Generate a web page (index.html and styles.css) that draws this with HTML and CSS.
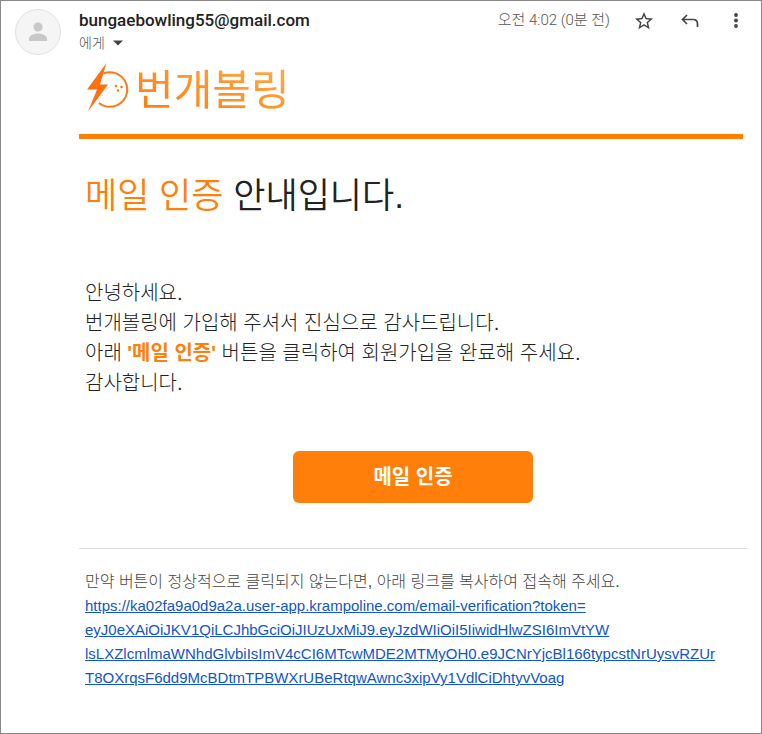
FILE: index.html
```html
<!DOCTYPE html>
<html lang="ko">
<head>
<meta charset="UTF-8">
<meta name="viewport" content="width=device-width, initial-scale=1.0">
<title>번개볼링 메일 인증</title>
<link rel="stylesheet" href="styles.css">
</head>
<body>

<div class="message">
    <div class="avatar">
        <svg width="24" height="24" viewBox="0 0 24 24" aria-hidden="true">
            <circle cx="12" cy="7" r="4.6" fill="#c8c8c8"/>
            <path d="M3 21v-2.500c0-3.500 5.500-5 9-5s9 1.500 9 5V21z" fill="#c8c8c8"/>
        </svg>
    </div>

    <div class="content">
        <header class="mail-header">
            <div class="sender">
                <div class="address">bungaebowling55@gmail.com</div>
                <button type="button" class="recipient">에게
                    <svg width="10" height="6" viewBox="0 0 10 6" aria-hidden="true"><path d="M0 0.500h10L5 5.500z" fill="#444"/></svg>
                </button>
            </div>
            <div class="time">오전 4:02 (0분 전)</div>
            <div class="actions">
                <button type="button" aria-label="별표">
                    <svg width="20" height="20" viewBox="1 1 22 22"><path d="M22 9.240l-7.190-.62L12 2 9.190 8.630 2 9.240l5.460 4.730L5.820 21 12 17.270 18.180 21l-1.630-7.030L22 9.240zM12 15.400l-3.760 2.270 1-4.280-3.320-2.880 4.380-.38L12 6.100l1.710 4.040 4.380.38-3.320 2.880 1 4.280L12 15.400z" fill="#444"/></svg>
                </button>
                <button type="button" aria-label="답장">
                    <svg width="20" height="20" viewBox="0 0 20 20" fill="none" stroke="#444" stroke-width="1.700"><path d="M7 4L2.500 8.500 7 13M2.500 8.500H13c3 0 4.500 2 4.500 4.500v3"/></svg>
                </button>
                <button type="button" aria-label="더보기">
                    <svg width="20" height="20" viewBox="0 0 20 20" fill="#444"><circle cx="10" cy="4" r="1.900"/><circle cx="10" cy="9.500" r="1.900"/><circle cx="10" cy="15" r="1.900"/></svg>
                </button>
            </div>
        </header>

        <div class="brand">
            <svg width="44" height="50" viewBox="0 0 44 50" aria-hidden="true">
                <path d="M18.500 11.500A17.300 17.300 0 1 1 14 41" fill="none" stroke="#ff7a14" stroke-width="2"/>
                <path d="M21.500 1L2 27.500h10L3 49.500 23 22.500h-8z" fill="#ff7010"/>
                <circle cx="31" cy="24" r="1.300" fill="#ff7a14"/>
                <circle cx="36.500" cy="25" r="1.300" fill="#ff7a14"/>
                <circle cx="33" cy="28.500" r="1.300" fill="#ff7a14"/>
            </svg>
            <span class="brand-name">번개볼링</span>
        </div>

        <h1><span class="accent">메일 인증</span> 안내입니다.</h1>

        <p class="text">
            안녕하세요.<br>
            번개볼링에 가입해 주셔서 진심으로 감사드립니다.<br>
            아래 <b class="accent">'메일 인증'</b> 버튼을 클릭하여 회원가입을 완료해 주세요.<br>
            감사합니다.
        </p>

        <button type="button" class="verify">메일 인증</button>

        <footer class="fallback">
            <p>만약 버튼이 정상적으로 클릭되지 않는다면, 아래 링크를 복사하여 접속해 주세요.</p>
            <a href="#">https://ka02fa9a0d9a2a.user-app.krampoline.com/email-verification?token=<br>eyJ0eXAiOiJKV1QiLCJhbGciOiJIUzUxMiJ9.eyJzdWIiOiI5IiwidHlwZSI6ImVtYW<br>lsLXZlcmlmaWNhdGlvbiIsImV4cCI6MTcwMDE2MTMyOH0.e9JCNrYjcBl166typcstNrUysvRZUr<br>T8OXrqsF6dd9McBDtmTPBWXrUBeRtqwAwnc3xipVy1VdlCiDhtyvVoag</a>
        </footer>
    </div>
</div>

</body>
</html>
```

FILE: styles.css
```css
* {
    box-sizing: border-box;
}
body {
    margin: 0;
    font-family: "Liberation Sans", "Noto Sans CJK KR", sans-serif;
    color: #222;
    background-color: #fff;
}
button {
    padding: 0;
    border: none;
    background: none;
    font-family: inherit;
    cursor: pointer;
}
svg {
    display: block;
}
.message {
    display: flex;
    gap: 18px;
    min-height: 100vh;
    padding: 8px 14px 40px;
    border: 1px solid #888;
}
.avatar {
    display: flex;
    align-items: center;
    justify-content: center;
    flex: none;
    width: 46px;
    height: 46px;
    border: 1px solid #e0e0e0;
    border-radius: 50%;
    background-color: #f5f5f5;
}
.content {
    flex: 1;
    min-width: 0;
}
.mail-header {
    display: flex;
    align-items: flex-start;
}
.sender {
    flex: 1;
}
.address {
    padding-bottom: 2px;
    font-family: Roboto, sans-serif;
    font-size: 17px;
    font-weight: 500;
    line-height: 22px;
}
.recipient {
    display: flex;
    align-items: center;
    gap: 8px;
    font-size: 14px;
    font-weight: 300;
    line-height: 20px;
    color: #555;
}
.time {
    font-family: Roboto, "Noto Sans CJK KR", sans-serif;
    font-size: 15px;
    font-weight: 300;
    line-height: 22px;
    color: #555;
}
.actions {
    display: flex;
    gap: 26px;
    margin: 2px 1px 0 24px;
}
.brand {
    display: flex;
    align-items: center;
    gap: 6px;
    height: 86px;
    padding: 0 6px 14px;
    margin-right: 4px;
    border-bottom: 5px solid #ff7f00;
}
.brand-name {
    font-family: "Noto Sans CJK KR", sans-serif;
    font-size: 42px;
    line-height: 50px;
    background: linear-gradient(20deg, #ff7a08, #ffad4d);
    -webkit-background-clip: text;
    background-clip: text;
    color: transparent;
}
.accent {
    color: #ff7f0a;
}
h1 {
    margin: 32px 6px 0;
    font-size: 35px;
    font-weight: 350;
    line-height: 50px;
}
.text {
    margin: 57px 6px 53px;
    font-size: 20px;
    font-weight: 300;
    line-height: 30px;
}
.text b {
    font-weight: bold;
}
.verify {
    display: block;
    width: 36%;
    height: 52px;
    padding-bottom: 4px;
    margin: 0 auto 45px;
    border-radius: 6px;
    background-color: #ff7f0a;
    color: #fff;
    font-size: 20px;
    font-weight: bold;
}
.fallback {
    padding: 21px 6px 0;
    border-top: 1px solid #ddd;
    font-size: 15px;
    line-height: 24px;
}
.fallback p {
    margin: 0;
    font-size: 16px;
    font-weight: 300;
    color: #444;
}
.fallback a {
    color: #15c;
}
```
